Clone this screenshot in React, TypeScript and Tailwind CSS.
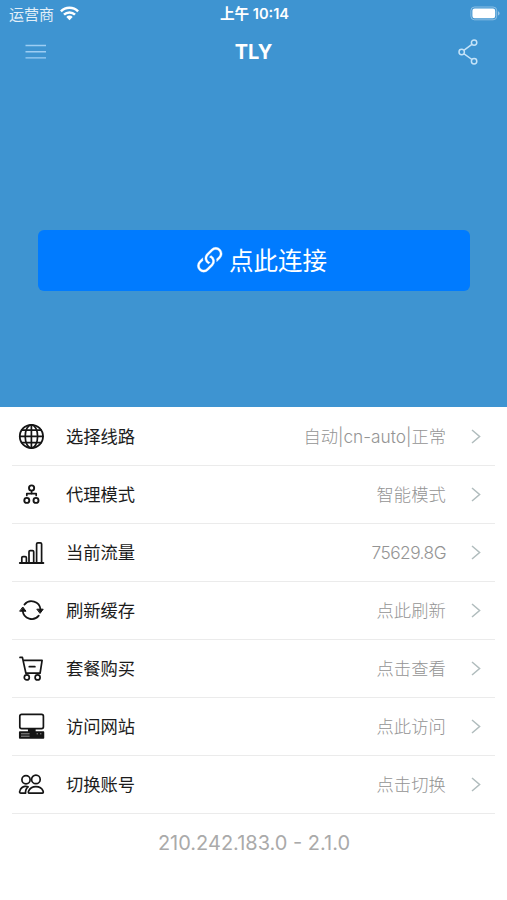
import type { ReactNode } from 'react';

function Icon({ children }: { children: ReactNode }) {
  return (
    <svg
      className="h-7 w-7 shrink-0 text-[#151515]"
      viewBox="0 1 28 28"
      overflow="visible"
      fill="none"
      stroke="currentColor"
      strokeWidth="1.7"
      strokeLinecap="round"
      strokeLinejoin="round"
    >
      {children}
    </svg>
  );
}

const GlobeIcon = (
  <Icon>
    <circle cx="14.4" cy="14.4" r="11.6" strokeWidth="1.8" />
    <ellipse cx="14.4" cy="14.4" rx="6.2" ry="11.6" />
    <path d="M14.4 2.8v23.2M2.8 14.4h23.2M4.6 8.2h19.6M4.6 20.6h19.6" />
  </Icon>
);

const NodesIcon = (
  <Icon>
    <circle cx="14.6" cy="8" r="2.6" strokeWidth="1.9" />
    <circle cx="9.8" cy="20.4" r="2.5" strokeWidth="1.9" />
    <circle cx="19" cy="20.4" r="2.5" strokeWidth="1.9" />
    <path d="M14.6 10.8v3M9.8 15.4v-1.7h9.4v1.7" />
  </Icon>
);

const BarsIcon = (
  <Icon>
    <path d="M2.8 25h23.6" strokeWidth="1.8" />
    <path d="M4.8 25v-5.2q0-1.2 1.2-1.2h2.2q1.2 0 1.2 1.2V25M12 25V13.8q0-1.2 1.2-1.2h2.3q1.2 0 1.2 1.2V25M19.6 25V6.1q0-1.3 1.3-1.3h2.4q1.3 0 1.3 1.3V25" />
  </Icon>
);

const RefreshIcon = (
  <Icon>
    <path d="M7.4 8.6A9.1 9.1 0 0 1 23.5 13.4M21.8 19.6A9.1 9.1 0 0 1 5.7 14.8" />
    <path d="M20.2 13.2h6l-2.9 3.9zM3 15.2h6L6 11.3z" fill="currentColor" strokeWidth="1" />
  </Icon>
);

const CartIcon = (
  <Icon>
    <path d="M3 3.4h2.4l3.5 15.8h14.2M6.3 6.3h18.8l-1.9 12.2M12.3 12.7h5.6" />
    <circle cx="9.8" cy="23.4" r="2.5" />
    <circle cx="20.6" cy="23.4" r="2.5" />
  </Icon>
);

const ComputerIcon = (
  <Icon>
    <rect x="2.8" y="2.4" width="23.6" height="14.2" rx="1.8" />
    <path d="M11.8 17h6v3h-6zM2.8 20.2h23.6v5.6H2.8z" fill="currentColor" />
    <path d="M4.4 21.8h7.8M4.4 24.2h7.8M20 21.8h.6M23.4 21.8h.6" stroke="#b5b5b5" strokeWidth="0.8" />
  </Icon>
);

const PeopleIcon = (
  <Icon>
    <circle cx="9" cy="9.8" r="4.1" />
    <circle cx="18.9" cy="9.4" r="4.3" />
    <path d="M12.3 23.2c-1.2 0-1.1-1.3-.6-2.3 1.2-2.8 3.9-4.3 7.2-4.3s6 1.5 7.1 4.3c.5 1.2.4 2.3-.8 2.3zM8.6 23.2H3.7c-1.3 0-1.2-1.3-.8-2.4.8-2.5 2.6-4.1 5-4.4q1.8-.2 3.2.4C9.3 18.2 8.3 20.5 8.6 23.2z" />
  </Icon>
);

const rows = [
  { icon: GlobeIcon, label: '选择线路', value: '自动|cn-auto|正常', spacing: 'tracking-[0px]' },
  { icon: NodesIcon, label: '代理模式', value: '智能模式', spacing: 'tracking-[0.1px]' },
  { icon: BarsIcon, label: '当前流量', value: '75629.8G', spacing: 'tracking-[-0.5px]' },
  { icon: RefreshIcon, label: '刷新缓存', value: '点此刷新', spacing: 'tracking-[0.1px]' },
  { icon: CartIcon, label: '套餐购买', value: '点击查看', spacing: 'tracking-[0.1px]' },
  { icon: ComputerIcon, label: '访问网站', value: '点此访问', spacing: 'tracking-[0.1px]' },
  { icon: PeopleIcon, label: '切换账号', value: '点击切换', spacing: 'tracking-[0.1px]' },
];

function StatusBar() {
  return (
    <div className="grid h-7 grid-cols-3 items-center pr-[7px] pl-[9px] text-white">
      <div className="flex items-center gap-[6px]">
        <span className="text-[15px] leading-none opacity-85">运营商</span>
        <svg className="-mt-[2px] h-[15px] w-[19px]" viewBox="0 0 19 15" fill="none" stroke="currentColor" strokeWidth="2.5">
          <path d="M.9 5.3a12.2 12.2 0 0 1 17.2 0M4 8.7a7.8 7.8 0 0 1 11 0" />
          <path d="M6.3 10.9a4.5 4.5 0 0 1 6.4 0l-3.2 3.3z" fill="currentColor" stroke="none" />
        </svg>
      </div>
      <span className="text-center text-[14.6px] leading-none font-semibold whitespace-nowrap">上午 10:14</span>
      <svg className="-mt-[2px] h-[15px] w-[30px] justify-self-end" viewBox="0 0 30 15">
        <rect x=".9" y="1" width="25.8" height="12.8" rx="3.6" fill="none" stroke="white" strokeOpacity=".4" />
        <rect x="2.4" y="2.6" width="22.8" height="9.6" rx="2.2" fill="white" />
        <path d="M28 5.2q1.6.6 1.6 2.2T28 9.6z" fill="white" fillOpacity=".45" />
      </svg>
    </div>
  );
}

export default function App() {
  return (
    <main className="flex h-[900px] w-[507px] flex-col overflow-hidden bg-white font-['Inter','Noto_Sans_CJK_SC',sans-serif]">
      <header className="h-[407px] bg-[#3e94d1]">
        <StatusBar />
        <nav className="grid h-12 grid-cols-3 items-center pr-[28px] pl-[25px] text-white">
          <svg className="h-5 w-[22px]" viewBox="0 0 22 20" stroke="#9dcdf3" strokeWidth="1.4">
            <path d="M.5 3.5h20.5M.5 9.7h20.5M.5 15.9h20.5" />
          </svg>
          <h1 className="pl-[3px] text-center text-[20px] leading-none font-bold">TLY</h1>
          <svg className="h-[28px] w-[21px] justify-self-end" viewBox="0 0 21 28" fill="none" stroke="#c5e3f8" strokeWidth="1.5">
            <circle cx="3.7" cy="14" r="2.7" />
            <circle cx="16.1" cy="4.6" r="2.7" />
            <circle cx="16.1" cy="23.2" r="2.7" />
            <path d="m5.8 12.3 8.1-6M5.8 15.7l8.1 5.8" />
          </svg>
        </nav>
        <button className="mr-[37px] ml-[38px] mt-[154px] flex h-[61px] w-[432px] items-center justify-center gap-[3px] rounded-md bg-[#007bff] pl-[11px] text-[24.5px] leading-none text-white">
          <svg className="-mt-[4px] h-[34px] w-[34px]" viewBox="0 0 16 16" fill="currentColor" stroke="currentColor" strokeWidth="0.15">
            <path d="M6.354 5.5H4a3 3 0 0 0 0 6h3a3 3 0 0 0 2.83-4H9q-.13 0-.25.03A2 2 0 0 1 7 10.5H4a2 2 0 1 1 0-4h1.535c.218-.376.495-.714.82-1z" transform="rotate(-45 8 8)" />
            <path d="M9 5.5a3 3 0 0 0-2.83 4h1.098A2 2 0 0 1 9 6.5h3a2 2 0 1 1 0 4h-1.535a4 4 0 0 1-.82 1H12a3 3 0 1 0 0-6z" transform="rotate(-45 8 8)" />
          </svg>
          <span className="font-['Noto_Sans_CJK_SC',sans-serif]">点此连接</span>
        </button>
      </header>
      <ul className="mx-3 mt-px">
        {rows.map((row) => (
          <li key={row.label} className="flex h-[58px] items-center border-b border-[#ebebeb] pr-[14px] pl-[5px]">
            {row.icon}
            <span className="ml-[21px] text-[17.3px] leading-none text-[#1c1c1c]">{row.label}</span>
            <span className={`ml-auto text-[17.3px] leading-none font-light text-[#949494] ${row.spacing}`}>{row.value}</span>
            <svg className="ml-[25px] h-[15px] w-[10px]" viewBox="0 0 10 15" fill="none" stroke="#b0bcbd" strokeWidth="1.5">
              <path d="m1 1 7.6 6.5L1 14" />
            </svg>
          </li>
        ))}
      </ul>
      <footer className="mt-[19px] pl-[1px] text-center text-[20px] leading-none text-[#aaaaaa]">210.242.183.0 - 2.1.0</footer>
    </main>
  );
}
